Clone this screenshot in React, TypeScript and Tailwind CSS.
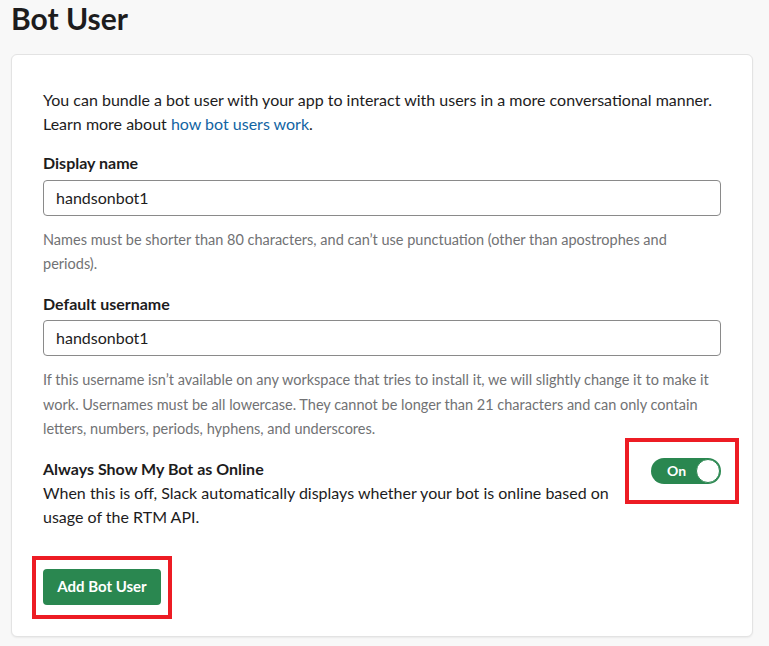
import React from "react";

export default function App() {
  return (
    <div
      className="min-h-[646px] w-full bg-[#f8f8f8] pt-px text-[#1d1c1d]"
      style={{ fontFamily: "Lato, 'Open Sans', sans-serif" }}
    >
      <h1 className="pl-[11px] text-[30px] font-bold leading-[34px] text-[#1d1c1d]">Bot User</h1>
      <div className="ml-[11px] mt-[19px] w-[742px] rounded-[6px] border border-[#e3e3e3] bg-white px-[31px] pb-[31px] pt-[33px] shadow-[0_1px_2px_rgba(0,0,0,0.06)]">
        <p className="text-[16px] leading-[24px]">
          You can bundle a bot user with your app to interact with users in a more conversational manner.
          <br />
          Learn more about <span className="text-[#1264a3]">how bot users work</span>.
        </p>

        <label className="mt-[15px] block text-[16px] font-bold leading-[24px]">Display name</label>
        <div className="mt-[5px] flex h-[36px] items-center rounded-[4px] border border-[#8a8a8a] px-[12px] text-[16px]">
          handsonbot1
        </div>
        <p className="mt-[12px] text-[14.5px] leading-[24px] text-[#717274]">
          Names must be shorter than 80 characters, and can’t use punctuation (other than apostrophes and
          periods).
        </p>

        <label className="mt-[16px] block text-[16px] font-bold leading-[24px]">Default username</label>
        <div className="mt-[4px] flex h-[36px] items-center rounded-[4px] border border-[#8a8a8a] px-[12px] text-[16px]">
          handsonbot1
        </div>
        <p className="mt-[12px] text-[14.5px] leading-[24.5px] text-[#717274]">
          If this username isn’t available on any workspace that tries to install it, we will slightly change it to make it
          work. Usernames must be all lowercase. They cannot be longer than 21 characters and can only contain
          letters, numbers, periods, hyphens, and underscores.
        </p>

        <div className="mt-[15px] flex items-start justify-between">
          <div className="w-[580px]">
            <div className="text-[16px] font-bold leading-[24px]">Always Show My Bot as Online</div>
            <p className="text-[16px] leading-[24px]">
              When this is off, Slack automatically displays whether your bot is online based on usage of the RTM API.
            </p>
          </div>
          <div className="relative mt-[1px]">
            <div className="pointer-events-none absolute -left-[26px] -right-[18px] -top-[20px] -bottom-[20px] border-[4px] border-[#ed1c24]" />
            <div className="flex h-[26px] w-[70px] items-center justify-between rounded-full bg-[#2a8750] pl-[16px] pr-[1px]">
              <span className="text-[14px] font-bold leading-none text-white">On</span>
              <span className="h-[24px] w-[24px] rounded-full border border-[#2a8750] bg-white" />
            </div>
          </div>
        </div>

        <div className="mt-[40px] flex">
          <div className="relative">
            <div className="pointer-events-none absolute -left-[11px] -right-[11px] -top-[13px] -bottom-[14px] border-[4px] border-[#ed1c24]" />
            <button className="flex h-[36px] w-[118px] items-center justify-center rounded-[4px] bg-[#2a8750] text-[15px] font-bold text-white">
              Add Bot User
            </button>
          </div>
        </div>
      </div>
    </div>
  );
}
